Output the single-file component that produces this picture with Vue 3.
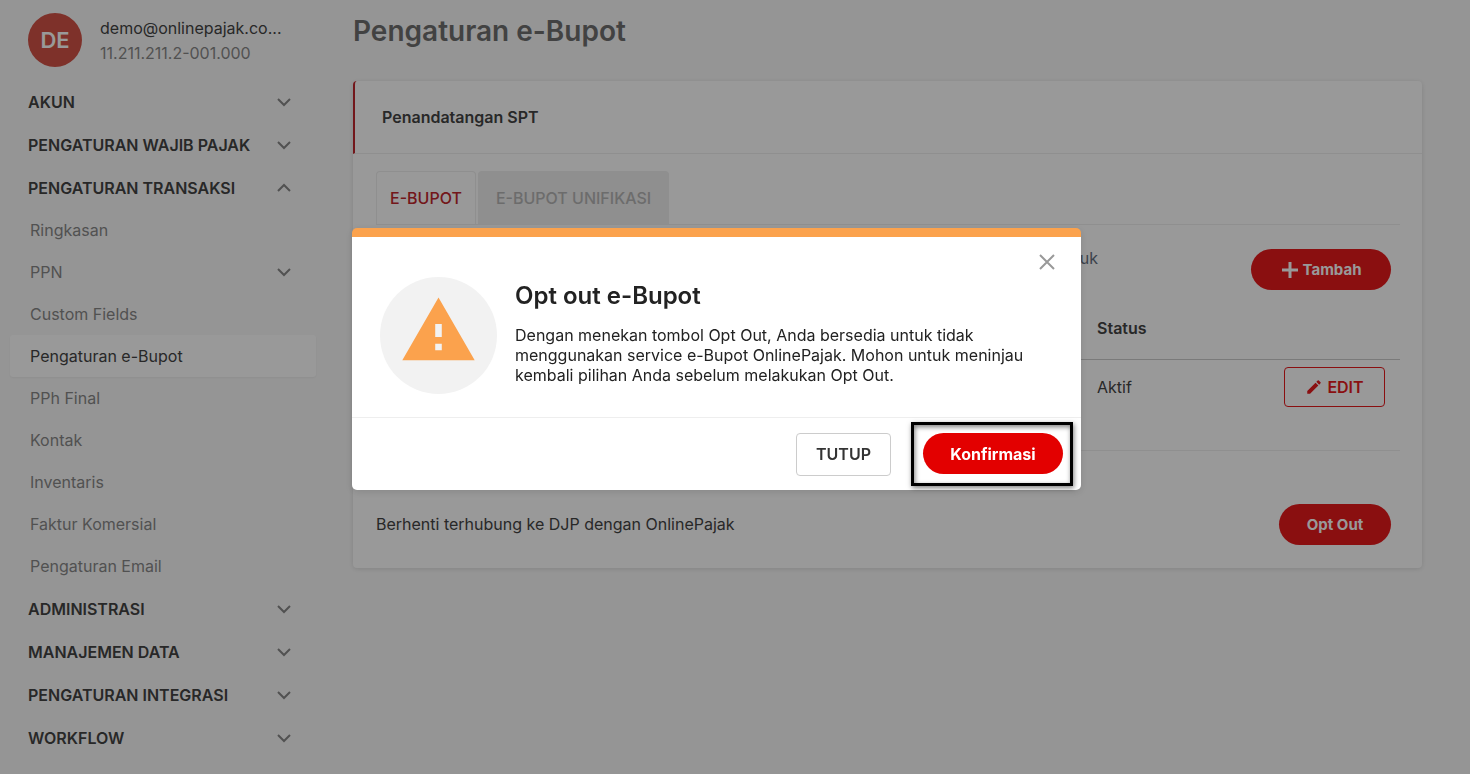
<template>
  <div class="page">
    <!-- Sidebar -->
    <aside class="sidebar">
      <div class="profile">
        <div class="avatar">DE</div>
        <div class="profile-text">
          <div class="email">demo@onlinepajak.co...</div>
          <div class="npwp">11.211.211.2-001.000</div>
        </div>
      </div>

      <nav>
        <ul class="menu">
          <li v-for="item in menu" :key="item.label">
            <a
              href="#"
              class="menu-link"
              :class="[item.type, { active: item.active }]"
              @click.prevent
            >
              <span>{{ item.label }}</span>
              <svg v-if="item.arrow" class="chevron" viewBox="0 0 16 16">
                <path :d="item.arrow === 'up' ? 'M2 11l6-6 6 6' : 'M2 5l6 6 6-6'" />
              </svg>
            </a>
          </li>
        </ul>
      </nav>
    </aside>

    <!-- Main content -->
    <main class="content">
      <h1>Pengaturan e-Bupot</h1>

      <section class="card">
        <h2 class="card-header">Penandatangan SPT</h2>
        <div class="card-body">
          <div class="tabs">
            <button class="tab current">E-BUPOT</button>
            <button class="tab">E-BUPOT UNIFIKASI</button>
          </div>

          <div class="intro">
            <p>untuk</p>
            <button class="pill add">
              <svg viewBox="0 0 18 18"><path d="M9 1v16M1 9h16" /></svg>
              Tambah
            </button>
          </div>

          <table>
            <thead>
              <tr>
                <th class="name-col"></th>
                <th>Status</th>
                <th></th>
              </tr>
            </thead>
            <tbody>
              <tr>
                <td></td>
                <td>Aktif</td>
                <td class="action">
                  <button class="edit">
                    <svg viewBox="0 0 24 24">
                      <path d="M3 17.25V21h3.75L17.81 9.94l-3.75-3.75L3 17.25zM20.71 7.04a1 1 0 0 0 0-1.41l-2.34-2.34a1 1 0 0 0-1.41 0l-1.83 1.83 3.75 3.75 1.83-1.83z" />
                    </svg>
                    EDIT
                  </button>
                </td>
              </tr>
            </tbody>
          </table>

          <div class="opt-out">
            <p>Berhenti terhubung ke DJP dengan OnlinePajak</p>
            <button class="pill small">Opt Out</button>
          </div>
        </div>
      </section>
    </main>

    <!-- Confirmation dialog -->
    <div v-if="showModal" class="backdrop">
      <div class="modal" role="dialog" aria-labelledby="modal-title">
        <button class="close" aria-label="Tutup" @click="showModal = false">
          <svg viewBox="0 0 18 18"><path d="M2 2l14 14M16 2L2 16" /></svg>
        </button>
        <div class="modal-body">
          <div class="warning">
            <svg viewBox="0 0 24 24">
              <path d="M1 21h22L12 2 1 21zm12-3h-2v-2h2v2zm0-4h-2v-4h2v4z" />
            </svg>
          </div>
          <div class="message">
            <h3 id="modal-title">Opt out e-Bupot</h3>
            <p>
              Dengan menekan tombol Opt Out, Anda bersedia untuk tidak
              menggunakan service e-Bupot OnlinePajak. Mohon untuk meninjau
              kembali pilihan Anda sebelum melakukan Opt Out.
            </p>
          </div>
        </div>
        <div class="modal-footer">
          <button class="cancel" @click="showModal = false">TUTUP</button>
          <div class="frame">
            <button class="pill confirm">Konfirmasi</button>
          </div>
        </div>
      </div>
    </div>
  </div>
</template>

<script setup>
import { ref } from 'vue'

const showModal = ref(true)

const menu = [
  { label: 'AKUN', type: 'group', arrow: 'down' },
  { label: 'PENGATURAN WAJIB PAJAK', type: 'group', arrow: 'down' },
  { label: 'PENGATURAN TRANSAKSI', type: 'group', arrow: 'up' },
  { label: 'Ringkasan', type: 'sub' },
  { label: 'PPN', type: 'sub', arrow: 'down' },
  { label: 'Custom Fields', type: 'sub' },
  { label: 'Pengaturan e-Bupot', type: 'sub', active: true },
  { label: 'PPh Final', type: 'sub' },
  { label: 'Kontak', type: 'sub' },
  { label: 'Inventaris', type: 'sub' },
  { label: 'Faktur Komersial', type: 'sub' },
  { label: 'Pengaturan Email', type: 'sub' },
  { label: 'ADMINISTRASI', type: 'group', arrow: 'down' },
  { label: 'MANAJEMEN DATA', type: 'group', arrow: 'down' },
  { label: 'PENGATURAN INTEGRASI', type: 'group', arrow: 'down' },
  { label: 'WORKFLOW', type: 'group', arrow: 'down' },
]
</script>

<style>
body {
  background: #f9f9f9;
}
</style>

<style scoped>
.page,
.page * {
  box-sizing: border-box;
}
.page {
  display: flex;
  min-height: 100vh;
  color: #444;
  font-family: Inter, "Liberation Sans", sans-serif;
  font-size: 16px;
}
h1,
h2,
h3,
p,
ul {
  margin: 0;
  padding: 0;
}
button {
  font-family: inherit;
  cursor: pointer;
}
svg {
  flex: none;
}

/* Sidebar */
.sidebar {
  flex: none;
  width: 326px;
  padding: 13px 10px 0;
}
.profile {
  display: flex;
  align-items: center;
  gap: 18px;
  height: 54px;
  margin-bottom: 13px;
  padding-left: 18px;
}
.avatar {
  display: flex;
  align-items: center;
  justify-content: center;
  width: 54px;
  height: 54px;
  border-radius: 50%;
  background: #d25246;
  color: #fff;
  font-size: 22px;
  font-weight: 600;
}
.profile-text {
  padding-top: 2px;
}
.email,
.npwp {
  line-height: 25px;
  white-space: nowrap;
}
.npwp {
  color: #888;
}
.menu {
  list-style: none;
}
.menu-link {
  display: flex;
  align-items: center;
  justify-content: space-between;
  height: 42px;
  padding: 0 24px 0 20px;
  border-radius: 3px;
  color: #888;
  text-decoration: none;
}
.menu-link.group {
  height: 43px;
  padding-left: 18px;
  color: #444;
  font-weight: 600;
}
.menu-link.active {
  background: #fff;
  box-shadow: 0 1px 2px rgba(0, 0, 0, 0.05);
  color: #444;
}
.chevron {
  width: 16px;
  height: 16px;
  fill: none;
  stroke: #888;
  stroke-width: 2;
}

/* Main content */
.content {
  flex: 1;
  padding: 13px 48px 0 27px;
}
h1 {
  margin-bottom: 32px;
  color: #6f6f6f;
  font-size: 28px;
  font-weight: 600;
  line-height: 36px;
}
.card {
  border-radius: 4px;
  background: #fff;
  box-shadow: 0 1px 5px rgba(0, 0, 0, 0.12);
}
.card-header {
  height: 73px;
  padding-left: 27px;
  border-bottom: 1px solid #eee;
  border-left: 2px solid #c0272d;
  border-top-left-radius: 4px;
  font-size: 16px;
  font-weight: 600;
  line-height: 72px;
}
.card-body {
  padding: 17px 22px 23px 23px;
}
.tabs {
  display: flex;
  gap: 2px;
  border-bottom: 1px solid #eee;
}
.tab {
  height: 53px;
  padding: 0 17px;
  border: 1px solid #eee;
  border-bottom: 0;
  border-radius: 4px 4px 0 0;
  background: #eee;
  color: #b5b5b5;
  font-size: 16px;
  font-weight: 500;
}
.tab.current {
  padding: 0 13px;
  background: #fff;
  color: #c0272d;
}
.intro {
  display: flex;
  justify-content: space-between;
  padding: 24px 9px 0 0;
}
.intro p {
  width: 722px;
  color: #656f80;
  line-height: 18px;
  text-align: right;
}
.pill {
  width: 140px;
  height: 41px;
  border: 0;
  border-radius: 21px;
  background: #e6191c;
  color: #fff;
  font-size: 15px;
  font-weight: 700;
}
.pill.small {
  width: 112px;
}
.pill.add {
  display: flex;
  align-items: center;
  justify-content: center;
  gap: 4px;
}
.pill.add svg {
  width: 18px;
  height: 18px;
  stroke: #fff;
  stroke-width: 3;
}
table {
  width: 100%;
  margin-top: 8px;
  border-collapse: collapse;
}
th,
td {
  height: 61px;
  padding: 0;
  border-bottom: 1px solid #ccc;
  text-align: left;
}
th {
  font-weight: 600;
}
td {
  height: 91px;
  padding-top: 7px;
  border-color: #eee;
  line-height: 40px;
  vertical-align: top;
}
.name-col {
  width: 721px;
}
.action {
  padding-right: 15px;
}
.edit {
  display: flex;
  align-items: center;
  justify-content: center;
  gap: 4px;
  width: 101px;
  height: 40px;
  margin-left: auto;
  border: 1px solid #e6191c;
  border-radius: 4px;
  background: none;
  color: #e6191c;
  font-size: 16px;
  font-weight: 600;
}
.edit svg {
  width: 18px;
  height: 18px;
  fill: #e6191c;
}
.opt-out {
  display: flex;
  align-items: center;
  justify-content: space-between;
  padding: 53px 9px 0 0;
}

/* Confirmation dialog */
.backdrop {
  position: fixed;
  inset: 0;
  padding: 228px 24px 0 352px;
  background: rgba(0, 0, 0, 0.4);
}
.modal {
  position: relative;
  max-width: 729px;
  border-top: 9px solid #fba24d;
  border-radius: 5px;
  background: #fff;
  box-shadow: 0 2px 8px rgba(0, 0, 0, 0.12);
  color: #222;
}
.close {
  position: absolute;
  top: 16px;
  right: 25px;
  padding: 0;
  border: 0;
  background: none;
}
.close svg {
  display: block;
  width: 18px;
  height: 18px;
  stroke: #999;
  stroke-width: 2;
}
.modal-body {
  display: flex;
  gap: 18px;
  padding: 40px 28px 23px;
  border-bottom: 1px solid #eee;
}
.warning {
  display: flex;
  flex: none;
  align-items: center;
  justify-content: center;
  width: 117px;
  height: 117px;
  padding-bottom: 10px;
  border-radius: 50%;
  background: #f2f2f2;
}
.warning svg {
  width: 79px;
  height: 79px;
  fill: #fba24d;
}
.message {
  max-width: 530px;
  padding-top: 4px;
}
h3 {
  margin-bottom: 14px;
  font-size: 24px;
  font-weight: 600;
  line-height: 30px;
}
.message p {
  line-height: 20px;
}
.modal-footer {
  display: flex;
  align-items: center;
  justify-content: flex-end;
  gap: 20px;
  padding: 4px 8px;
}
.cancel {
  width: 95px;
  height: 43px;
  border: 1px solid #ccc;
  border-radius: 4px;
  background: #fff;
  color: #333;
  font-size: 16px;
  font-weight: 600;
}
.frame {
  padding: 8px 7px 9px 9px;
  border: 3px solid #000;
  box-shadow: 1px 2px 5px rgba(0, 0, 0, 0.5), inset 1px 2px 5px rgba(0, 0, 0, 0.5);
}
.confirm {
  display: block;
  background: #e30000;
  font-size: 16px;
}
</style>
